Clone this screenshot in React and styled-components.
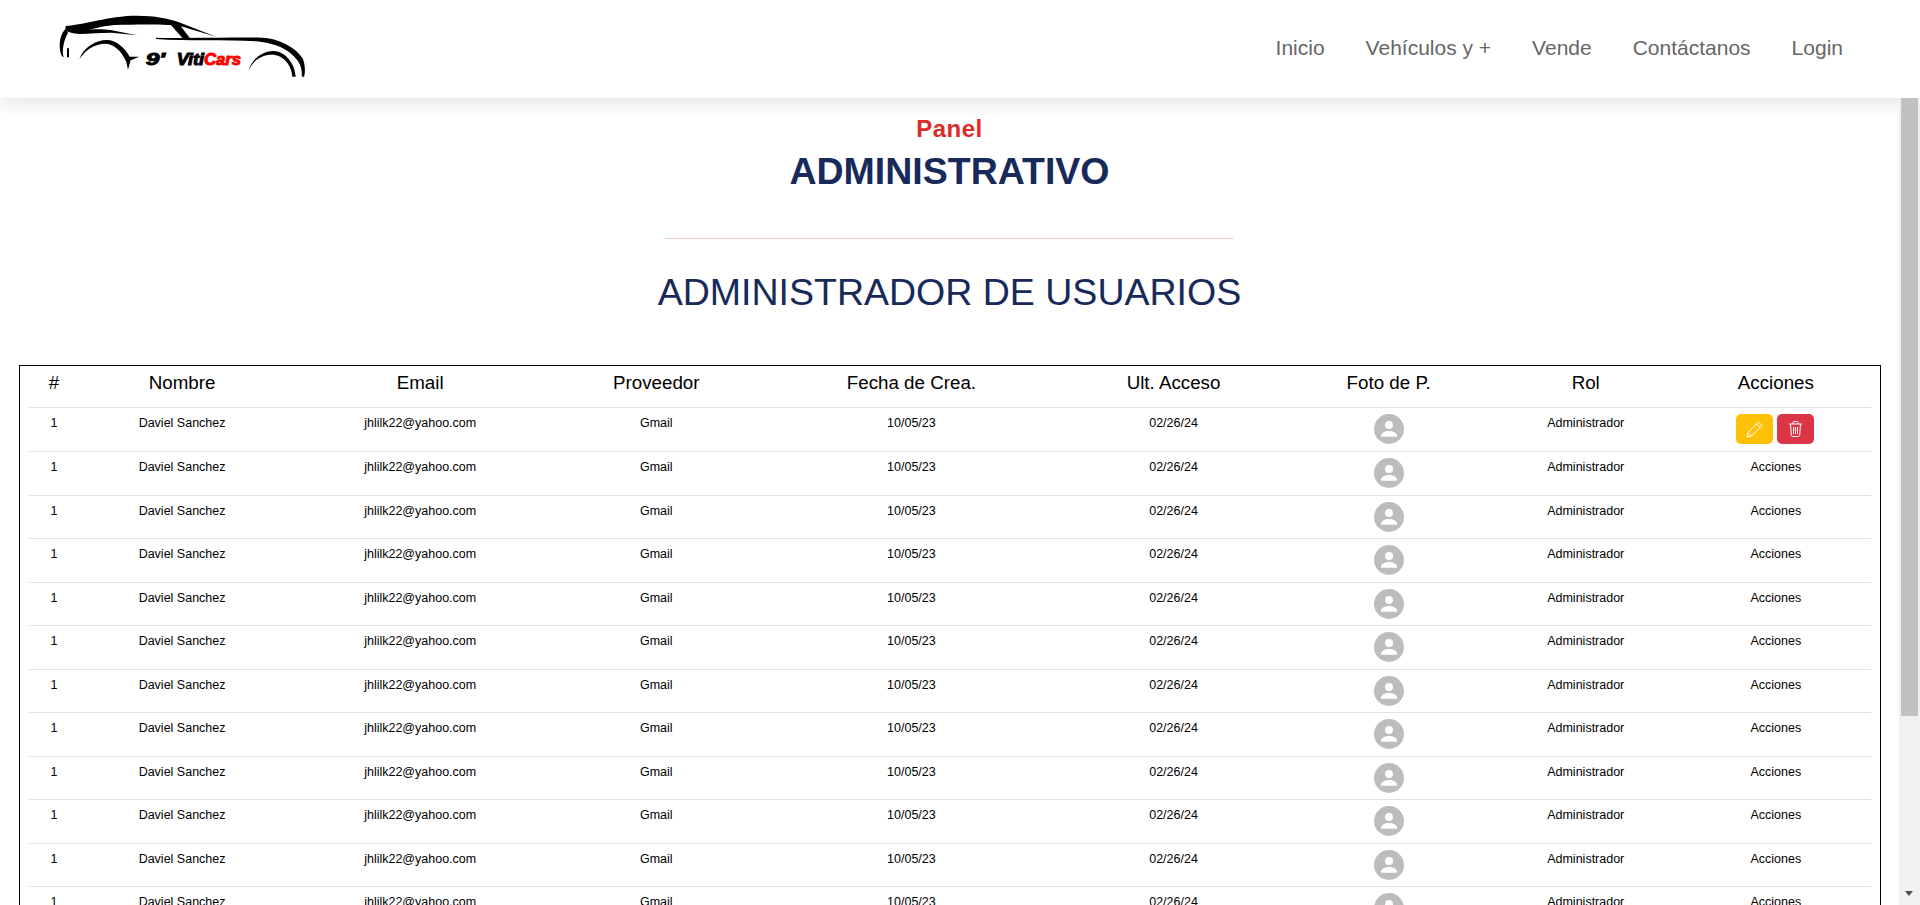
import React from "react";
import styled, { createGlobalStyle } from "styled-components";

const Global = createGlobalStyle`
  html, body { margin: 0; height: 100%; overflow: hidden; background: #fff; }
  body { font-family: "Liberation Sans", Arial, sans-serif; color: #000; }
`;

const Page = styled.div`
  height: 100vh;
  display: flex;
  flex-direction: column;
  background: #fff;
`;

const NavBar = styled.header`
  flex: 0 0 98px;
  display: flex;
  align-items: center;
  justify-content: space-between;
  padding: 0 77px 0 50px;
  background: #fff;
  box-shadow: 0 4px 20px rgba(0, 0, 0, 0.12);
`;

const LogoArt = styled.svg`
  display: block;
  width: 260px;
  height: 70px;
  margin-top: -8px;
`;

const NavLinks = styled.nav`
  display: flex;
  gap: 41px;
  margin-top: -2px;
`;

const NavLink = styled.a`
  font-size: 21px;
  color: #666;
  text-decoration: none;
`;

const Body = styled.div`
  flex: 1 1 auto;
  min-height: 0;
  position: relative;
  z-index: 1;
  display: flex;
`;

const Scroller = styled.main`
  flex: 1 1 auto;
  min-width: 0;
  overflow-y: auto;
  overflow-x: hidden;
  scrollbar-width: none;
`;

const Rail = styled.div`
  flex: 0 0 21px;
  display: flex;
  flex-direction: column;
  align-items: center;
  background: #f1f1f1;
`;

const RailThumb = styled.div`
  flex: 0 0 618px;
  width: 17px;
  background: #c1c1c1;
`;

const RailArrow = styled.div`
  margin: auto 0 9px;
  width: 0;
  height: 0;
  border-left: 4.5px solid transparent;
  border-right: 4.5px solid transparent;
  border-top: 5px solid #505050;
`;

const Content = styled.div`
  padding-top: 15px;
`;

const Heading = styled.div`
  text-align: center;
`;

const Kicker = styled.div`
  font-size: 24px;
  line-height: 32px;
  font-weight: 700;
  letter-spacing: 0.5px;
  color: #db2c27;
`;

const Title = styled.h1`
  margin: 4px 0 0;
  font-size: 37.5px;
  line-height: 44px;
  font-weight: 700;
  color: #182a5a;
`;

const Rule = styled.hr`
  width: 30%;
  height: 1px;
  margin: 45px auto 0;
  border: 0;
  background: #f5cbc7;
`;

const SubTitle = styled.h2`
  margin: 31px 0 0;
  font-size: 37.5px;
  line-height: 44px;
  font-weight: 400;
  text-align: center;
  color: #182a5a;
`;

const TableBox = styled.section`
  margin: 51px 18px 0 19px;
  padding: 0 9px 10px;
  border: 1px solid #000;
`;

const Table = styled.table`
  width: 100%;
  table-layout: fixed;
  border-collapse: collapse;
`;

const HeadCell = styled.th`
  height: 41.5px;
  box-sizing: border-box;
  padding: 0 8px 8px;
  font-size: 18.75px;
  font-weight: 400;
  text-align: center;
  border-bottom: 1px solid #dee2e6;
  &:first-child { padding-left: 13px; }
`;

const Cell = styled.td`
  height: 43.5px;
  box-sizing: border-box;
  padding: 6px 8px 0;
  font-size: 12.5px;
  line-height: 18px;
  text-align: center;
  vertical-align: top;
  border-bottom: 1px solid #dee2e6;
  &:first-child { padding-left: 13px; }
  tr:first-child > & { height: 44px; }
`;

const AvatarArt = styled.svg`
  display: block;
  width: 30px;
  height: 30px;
  margin: 0 auto;
`;

const ActionRow = styled.div`
  display: flex;
  justify-content: center;
  gap: 4px;
  padding-right: 2px;
`;

const ActionButton = styled.button`
  width: 37px;
  height: 30px;
  padding: 0;
  display: flex;
  align-items: center;
  justify-content: center;
  border: 0;
  border-radius: 5px;
  background: ${(p) => (p.$kind === "edit" ? "#ffc107" : "#dc3545")};
`;

const columns = [
  ["#", 45, "1"],
  ["Nombre", 216, "Daviel Sanchez"],
  ["Email", 260, "jhlilk22@yahoo.com"],
  ["Proveedor", 212, "Gmail"],
  ["Fecha de Crea.", 298, "10/05/23"],
  ["Ult. Acceso", 226, "02/26/24"],
  ["Foto de P.", 204, null],
  ["Rol", 190, "Administrador"],
  ["Acciones", 190, "Acciones"],
];

const LogoWord = ({ x, len, fill = "#000", children }) => (
  <text
    x={x}
    y="195"
    fontFamily="Liberation Sans"
    fontWeight="700"
    fontStyle="italic"
    fontSize="48"
    fill={fill}
    stroke={fill}
    strokeWidth="3"
    textLength={len}
    lengthAdjust="spacingAndGlyphs"
  >
    {children}
  </text>
);

const Logo = () => (
  <LogoArt viewBox="150 30 780 210" aria-label="D' ViTiCars">
    <path fill="#000" d="M197 78 C240 76 290 58 380 48 C450 44 500 54 535 66 L648 110 L548 80 C520 73 440 72 345 75 C320 77 300 81 268 89 C290 87 315 88 335 91 L412 106 L335 98 C300 98 270 101 238 102 C220 101 205 98 197 90 Z" />
    <path fill="#000" d="M510 72 L540 76 L572 117 L550 117 Z" />
    <path fill="#000" d="M468 113 C560 116 690 112 785 113 C835 115 885 140 908 175 C915 192 917 215 912 231 L905 229 C908 205 898 182 875 163 C850 140 810 128 770 124 C680 119 560 124 468 117 Z" />
    <path fill="#000" d="M197 86 C182 100 177 125 180 150 C182 162 185 170 191 172 C186 155 189 125 204 98 Z" />
    <path fill="#000" d="M201 145 h6 v27 h-6 Z" />
    <path fill="#000" d="M238 178 C250 140 290 120 320 120 C350 120 375 145 389 170 L418 170 L392 181 L384 209 L379 186 C365 152 340 131 315 131 C285 131 255 150 238 178 Z" />
    <path fill="#000" d="M745 213 C755 175 790 153 820 153 C855 153 885 190 887 230 L877 230 C875 195 850 164 815 164 C785 164 760 180 745 213 Z" />
    <LogoWord x="437" len="58">9'</LogoWord>
    <LogoWord x="530" len="82">Viti</LogoWord>
    <LogoWord x="612" len="111" fill="#f00">Cars</LogoWord>
  </LogoArt>
);

const Avatar = () => (
  <AvatarArt viewBox="0 0 30 30">
    <circle cx="15" cy="15" r="15" fill="#bdbdbd" />
    <circle cx="15" cy="11" r="4" fill="#fff" />
    <path fill="#fff" d="M7 22.7 V21.5 C7 19 11 17 15 17 S23 19 23 21.5 V22.7 Z" />
  </AvatarArt>
);

const PencilIcon = () => (
  <svg width="17" height="17" viewBox="0 0 17 17" fill="none" stroke="#fff" strokeWidth="1" strokeLinejoin="round">
    <path d="M12.5 1 L16 4.5 L5.5 15 L1 16 L2 11.5 Z" />
    <path d="M10.5 3 L14 6.5 M2 11.5 L5.5 15" />
  </svg>
);

const TrashIcon = () => (
  <svg width="15" height="16" viewBox="0 0 15 16" fill="none" stroke="#fff" strokeWidth="1">
    <path d="M1 3 H14 M5 3 V1.5 C5 1 5.5 .5 6 .5 H9 C9.5 .5 10 1 10 1.5 V3" />
    <path d="M2.5 3 L3.3 14 C3.4 15 4 15.5 5 15.5 H10 C11 15.5 11.6 15 11.7 14 L12.5 3" />
    <path d="M5.5 6 V13 M7.5 6 V13 M9.5 6 V13" />
  </svg>
);

const rows = Array.from({ length: 16 }, (_, i) => i);

export default function App() {
  return (
    <Page>
      <Global />
      <NavBar>
        <Logo />
        <NavLinks>
          {["Inicio", "Vehículos y +", "Vende", "Contáctanos", "Login"].map((l) => (
            <NavLink key={l} href="#">{l}</NavLink>
          ))}
        </NavLinks>
      </NavBar>
      <Body>
        <Scroller>
          <Content>
            <Heading>
              <Kicker>Panel</Kicker>
              <Title>ADMINISTRATIVO</Title>
            </Heading>
            <Rule />
            <SubTitle>ADMINISTRADOR DE USUARIOS</SubTitle>
            <TableBox>
              <Table>
                <colgroup>
                  {columns.map(([name, width]) => <col key={name} style={{ width }} />)}
                </colgroup>
                <thead>
                  <tr>
                    {columns.map(([name]) => <HeadCell key={name}>{name}</HeadCell>)}
                  </tr>
                </thead>
                <tbody>
                  {rows.map((r) => (
                    <tr key={r}>
                      {columns.map(([name, , value]) => (
                        <Cell key={name}>
                          {name === "Foto de P." ? (
                            <Avatar />
                          ) : name === "Acciones" && r === 0 ? (
                            <ActionRow>
                              <ActionButton $kind="edit" aria-label="Editar"><PencilIcon /></ActionButton>
                              <ActionButton $kind="delete" aria-label="Eliminar"><TrashIcon /></ActionButton>
                            </ActionRow>
                          ) : (
                            value
                          )}
                        </Cell>
                      ))}
                    </tr>
                  ))}
                </tbody>
              </Table>
            </TableBox>
          </Content>
        </Scroller>
        <Rail>
          <RailThumb />
          <RailArrow />
        </Rail>
      </Body>
    </Page>
  );
}
